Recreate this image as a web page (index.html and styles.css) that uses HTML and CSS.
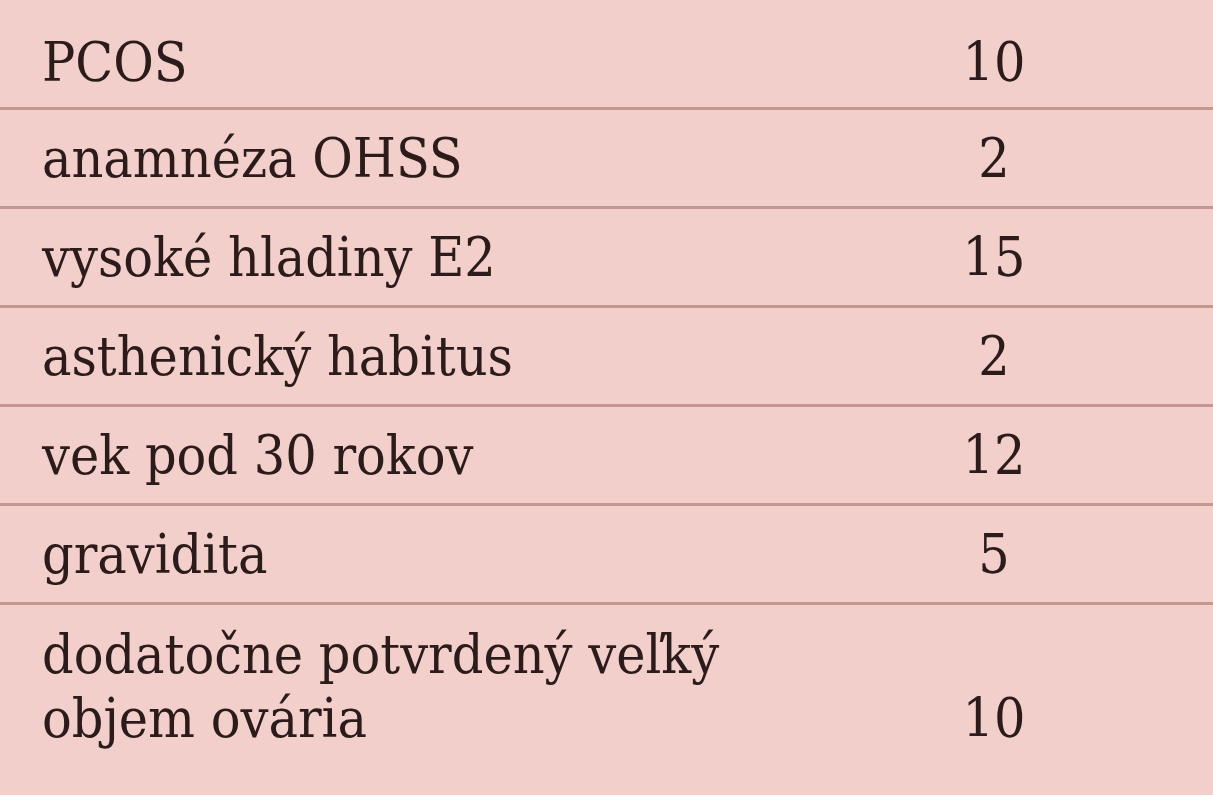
FILE: index.html
```html
<!DOCTYPE html>
<html lang="sk">
<head>
<meta charset="utf-8">
<title>OHSS rizikové faktory</title>
<link rel="stylesheet" href="styles.css">
</head>
<body>
<div class="table">
  <div class="row first"><div class="label">PCOS</div><div class="value">10</div></div>
  <div class="row"><div class="label">anamnéza OHSS</div><div class="value">2</div></div>
  <div class="row"><div class="label">vysoké hladiny E2</div><div class="value">15</div></div>
  <div class="row"><div class="label">asthenický habitus</div><div class="value">2</div></div>
  <div class="row"><div class="label">vek pod 30 rokov</div><div class="value">12</div></div>
  <div class="row"><div class="label">gravidita</div><div class="value">5</div></div>
  <div class="row last"><div class="label">dodatočne potvrdený veľký<br>objem ovária</div><div class="value">10</div></div>
</div>
</body>
</html>
```
FILE: styles.css
```css
html, body {
  margin: 0;
  padding: 0;
  background: #ffffff;
}
.table {
  width: 1213px;
  height: 795px;
  background: #f2cfca;
  display: flex;
  flex-direction: column;
  font-family: "DejaVu Serif", "Liberation Serif", serif;
  font-stretch: condensed;
  font-size: 55px;
  line-height: 64px;
  color: #2b1b1b;
}
.row {
  display: flex;
  align-items: center;
  height: 96px;
  border-bottom: 3px solid #c59793;
  box-sizing: content-box;
}
.row.first {
  height: 107px;
}
.row.first .label,
.row.first .value {
  padding-top: 16px;
}
.row.last {
  border-bottom: none;
  flex: 1;
  align-items: flex-end;
  padding-bottom: 45px;
}
.label {
  flex: 0 0 auto;
  width: 900px;
  padding-left: 42px;
  box-sizing: border-box;
}
.value {
  width: 188px;
  text-align: center;
}
```
